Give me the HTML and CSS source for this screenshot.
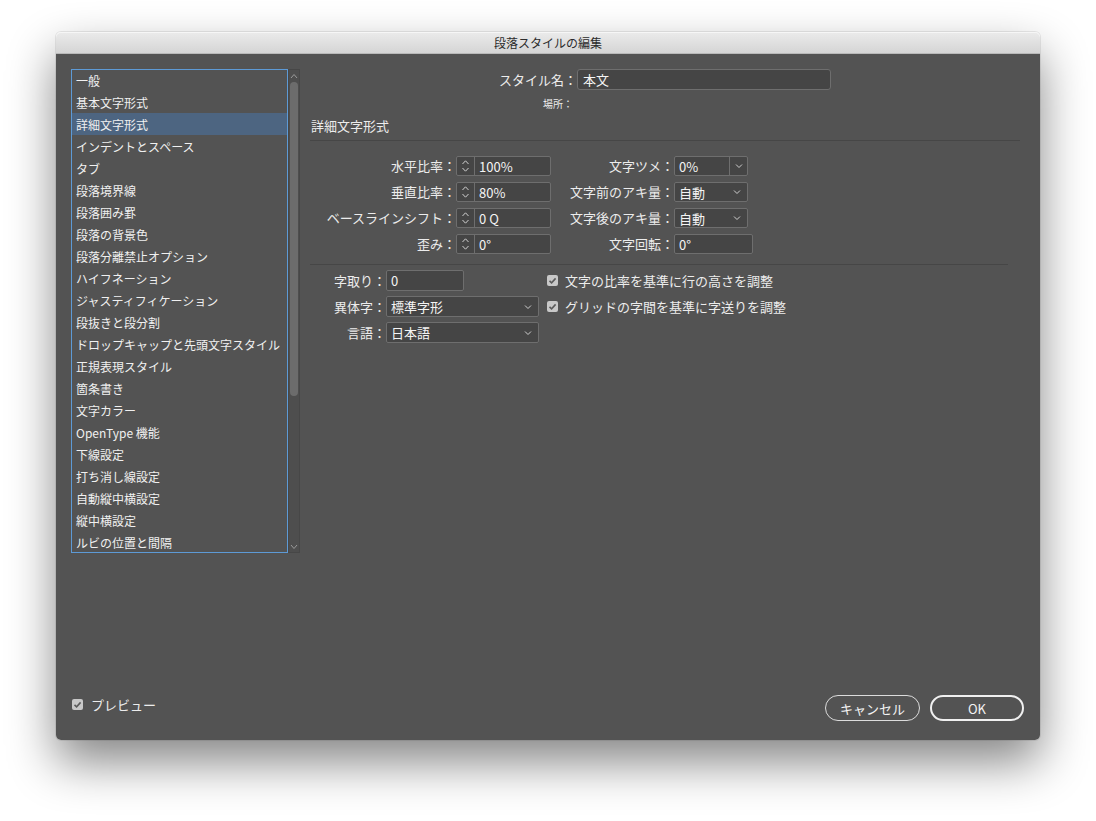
FILE: index.html
```html
<!DOCTYPE html>
<html lang="ja">
<head>
<meta charset="utf-8">
<title>段落スタイルの編集</title>
<link rel="stylesheet" href="styles.css">
</head>
<body>
<div class="window">
  <div class="titlebar">段落スタイルの編集</div>
  <div class="body">
    <div class="main">
      <div class="sidebar">
        <ul class="list">
          <li>一般</li>
          <li>基本文字形式</li>
          <li class="selected">詳細文字形式</li>
          <li>インデントとスペース</li>
          <li>タブ</li>
          <li>段落境界線</li>
          <li>段落囲み罫</li>
          <li>段落の背景色</li>
          <li>段落分離禁止オプション</li>
          <li>ハイフネーション</li>
          <li>ジャスティフィケーション</li>
          <li>段抜きと段分割</li>
          <li>ドロップキャップと先頭文字スタイル</li>
          <li>正規表現スタイル</li>
          <li>箇条書き</li>
          <li>文字カラー</li>
          <li>OpenType 機能</li>
          <li>下線設定</li>
          <li>打ち消し線設定</li>
          <li>自動縦中横設定</li>
          <li>縦中横設定</li>
          <li>ルビの位置と間隔</li>
        </ul>
        <div class="scrollbar">
          <svg class="sb-arrow" width="8" height="6" viewBox="0 0 8 6"><polyline points="1,5 4,1.5 7,5" fill="none" stroke="#9a9a9a" stroke-width="1"/></svg>
          <div class="thumb"></div>
          <div class="sb-spacer"></div>
          <svg class="sb-arrow" width="8" height="6" viewBox="0 0 8 6"><polyline points="1,1 4,4.5 7,1" fill="none" stroke="#9a9a9a" stroke-width="1"/></svg>
        </div>
      </div>
      <div class="panel">
        <div class="name-row">
          <span class="name-label">スタイル名：</span>
          <div class="textbox name-input">本文</div>
        </div>
        <div class="place-row"><span class="name-label small">場所：</span></div>
        <div class="section-title">詳細文字形式</div>
        <div class="sep sep1"></div>
        <div class="fields">
          <span class="label">水平比率：</span>
          <div class="spin"><span class="arrows"><svg width="9" height="16" viewBox="0 0 9 16"><polyline points="1.5,6 4.5,2.8 7.5,6" fill="none" stroke="#d0d0d0" stroke-width="1"/><polyline points="1.5,10 4.5,13.2 7.5,10" fill="none" stroke="#d0d0d0" stroke-width="1"/></svg></span><span class="val">100%</span></div>
          <span class="label">文字ツメ：</span>
          <div class="combo w74"><span class="val">0%</span><span class="dd"><svg width="8" height="6" viewBox="0 0 8 6"><polyline points="1,1.5 4,4.5 7,1.5" fill="none" stroke="#cfcfcf" stroke-width="1"/></svg></span></div>

          <span class="label">垂直比率：</span>
          <div class="spin"><span class="arrows"><svg width="9" height="16" viewBox="0 0 9 16"><polyline points="1.5,6 4.5,2.8 7.5,6" fill="none" stroke="#d0d0d0" stroke-width="1"/><polyline points="1.5,10 4.5,13.2 7.5,10" fill="none" stroke="#d0d0d0" stroke-width="1"/></svg></span><span class="val">80%</span></div>
          <span class="label">文字前のアキ量：</span>
          <div class="select w74"><span class="val">自動</span><svg class="chev" width="8" height="6" viewBox="0 0 8 6"><polyline points="1,1.5 4,4.5 7,1.5" fill="none" stroke="#cfcfcf" stroke-width="1"/></svg></div>

          <span class="label">ベースラインシフト：</span>
          <div class="spin"><span class="arrows"><svg width="9" height="16" viewBox="0 0 9 16"><polyline points="1.5,6 4.5,2.8 7.5,6" fill="none" stroke="#d0d0d0" stroke-width="1"/><polyline points="1.5,10 4.5,13.2 7.5,10" fill="none" stroke="#d0d0d0" stroke-width="1"/></svg></span><span class="val">0 Q</span></div>
          <span class="label">文字後のアキ量：</span>
          <div class="select w74"><span class="val">自動</span><svg class="chev" width="8" height="6" viewBox="0 0 8 6"><polyline points="1,1.5 4,4.5 7,1.5" fill="none" stroke="#cfcfcf" stroke-width="1"/></svg></div>

          <span class="label">歪み：</span>
          <div class="spin"><span class="arrows"><svg width="9" height="16" viewBox="0 0 9 16"><polyline points="1.5,6 4.5,2.8 7.5,6" fill="none" stroke="#d0d0d0" stroke-width="1"/><polyline points="1.5,10 4.5,13.2 7.5,10" fill="none" stroke="#d0d0d0" stroke-width="1"/></svg></span><span class="val">0°</span></div>
          <span class="label">文字回転：</span>
          <div class="textbox w79"><span class="val">0°</span></div>
        </div>
        <div class="sep sep2"></div>
        <div class="lower">
          <span class="label">字取り：</span>
          <div class="textbox w78"><span class="val">0</span></div>
          <div class="check-cell"><span class="cb"><svg width="11" height="11" viewBox="0 0 11 11"><polyline points="2.5,5.8 4.6,7.8 8.6,3.4" fill="none" stroke="#5b5b5b" stroke-width="1.6"/></svg></span>文字の比率を基準に行の高さを調整</div>

          <span class="label">異体字：</span>
          <div class="select"><span class="val">標準字形</span><svg class="chev" width="8" height="6" viewBox="0 0 8 6"><polyline points="1,1.5 4,4.5 7,1.5" fill="none" stroke="#cfcfcf" stroke-width="1"/></svg></div>
          <div class="check-cell"><span class="cb"><svg width="11" height="11" viewBox="0 0 11 11"><polyline points="2.5,5.8 4.6,7.8 8.6,3.4" fill="none" stroke="#5b5b5b" stroke-width="1.6"/></svg></span>グリッドの字間を基準に字送りを調整</div>

          <span class="label">言語：</span>
          <div class="select"><span class="val">日本語</span><svg class="chev" width="8" height="6" viewBox="0 0 8 6"><polyline points="1,1.5 4,4.5 7,1.5" fill="none" stroke="#cfcfcf" stroke-width="1"/></svg></div>
          <div></div>
        </div>
      </div>
    </div>
    <div class="footer">
      <div class="preview"><span class="cb"><svg width="11" height="11" viewBox="0 0 11 11"><polyline points="2.5,5.8 4.6,7.8 8.6,3.4" fill="none" stroke="#5b5b5b" stroke-width="1.6"/></svg></span>プレビュー</div>
      <div class="buttons">
        <button class="btn cancel">キャンセル</button>
        <button class="btn ok">OK</button>
      </div>
    </div>
  </div>
</div>
</body>
</html>
```
FILE: styles.css
```css
html, body {
  margin: 0;
  padding: 0;
  background: #ffffff;
}
body {
  font-family: "Noto Sans CJK JP", "Noto Sans", sans-serif;
  color: #ececec;
  min-height: 821px;
  padding-top: 32px;
  box-sizing: border-box;
}
.window {
  margin: 0 0 0 56px;
  width: 984px;
  height: 708px;
  border-radius: 5px;
  display: flex;
  flex-direction: column;
  box-shadow: 0 22px 48px rgba(0, 0, 0, 0.48), 0 0 0 1px rgba(0, 0, 0, 0.08);
}
.titlebar {
  height: 21px;
  line-height: 21px;
  border-bottom: 1px solid #b9b9b9;
  background: linear-gradient(#ebebeb, #d5d5d5);
  border-radius: 5px 5px 0 0;
  text-align: center;
  font-size: 12px;
  color: #2c2c2c;
  box-shadow: inset 0 1px 0 #f6f6f6;
}
.body {
  flex: 1;
  background: #535353;
  border-radius: 0 0 5px 5px;
  padding: 15px 16px 19px 15px;
  display: flex;
  flex-direction: column;
}
.main {
  display: flex;
  gap: 10px;
}
.sidebar {
  display: flex;
  height: 484px;
}
.list {
  margin: 0;
  padding: 0;
  list-style: none;
  width: 217px;
  height: 484px;
  outline: 1px solid #5d9ad6;
  outline-offset: -1px;
  font-size: 12px;
}
.list li {
  height: 22px;
  line-height: 23px;
  padding-left: 5px;
  color: #f0f0f0;
  white-space: nowrap;
}
.list li.selected {
  background: #4d6581;
}
.scrollbar {
  width: 12px;
  height: 484px;
  box-sizing: border-box;
  background: #4e4e4e;
  border: 1px solid #474747;
  display: flex;
  flex-direction: column;
  align-items: center;
}
.sb-arrow {
  margin: 3px 0 2px;
  flex: none;
}
.thumb {
  margin-top: 1px;
  width: 8px;
  height: 314px;
  border-radius: 4px;
  background: #6c6c6c;
}
.sb-spacer {
  flex: 1;
}
.panel {
  flex: 1;
  font-size: 13px;
}
.name-row {
  display: flex;
  align-items: center;
  height: 21px;
}
.name-label {
  width: 267px;
  text-align: right;
  flex: none;
}
.name-label.small {
  font-size: 10px;
  width: 263px;
}
.textbox, .spin, .combo, .select {
  box-sizing: border-box;
  height: 20px;
  background: #454545;
  border: 1px solid #6e6e6e;
  border-radius: 2px;
  display: flex;
  align-items: center;
  color: #f4f4f4;
}
.name-input {
  width: 254px;
  height: 21px;
  border-radius: 3px;
  padding-left: 5px;
}
.place-row {
  display: flex;
  height: 14px;
  line-height: 14px;
  margin-top: 7px;
}
.section-title {
  margin-top: 6px;
  height: 18px;
  line-height: 18px;
  padding-left: 1px;
}
.sep {
  height: 1px;
  background: #464646;
}
.sep1 {
  margin-top: 5px;
  width: 710px;
}
.sep2 {
  margin-top: 10px;
  width: 698px;
}
.fields {
  margin-top: 15px;
  display: grid;
  grid-template-columns: 146px 95px 123px auto;
  grid-auto-rows: 20px;
  row-gap: 6px;
  align-items: center;
}
.label {
  text-align: right;
  white-space: nowrap;
  line-height: 20px;
}
.spin .arrows {
  width: 17px;
  height: 18px;
  border-right: 1px solid #6e6e6e;
  display: flex;
  align-items: center;
  justify-content: center;
  flex: none;
}
.val {
  padding-left: 4px;
  flex: 1;
  white-space: nowrap;
}
.combo .dd {
  width: 17px;
  height: 18px;
  border-left: 1px solid #6e6e6e;
  display: flex;
  align-items: center;
  justify-content: center;
}
.select .chev {
  margin-right: 6px;
  flex: none;
}
.w74 { width: 74px; }
.w79 { width: 79px; }
.w78 { width: 78px; }
.lower {
  margin-top: 5px;
  display: grid;
  grid-template-columns: 76px 153px auto;
  grid-auto-rows: 21px;
  row-gap: 5px;
  align-items: center;
}
.lower .textbox, .lower .select {
  height: 21px;
}
.check-cell {
  display: flex;
  align-items: center;
  padding-left: 8px;
  white-space: nowrap;
}
.cb {
  width: 11px;
  height: 11px;
  border-radius: 2px;
  background: #c8c8c8;
  display: inline-flex;
  margin-right: 7px;
  flex: none;
}
.footer {
  margin-top: auto;
  display: flex;
  justify-content: space-between;
  align-items: flex-start;
  height: 26px;
}
.preview {
  display: flex;
  align-items: center;
  height: 19px;
  padding-left: 1px;
  font-size: 13px;
}
.preview .cb {
  margin-right: 8px;
}
.buttons {
  display: flex;
  gap: 10px;
}
.btn {
  box-sizing: border-box;
  height: 26px;
  border-radius: 13px;
  background: transparent;
  color: #f4f4f4;
  font-family: "Noto Sans CJK JP", "Noto Sans", sans-serif;
  font-size: 13px;
  padding: 0;
  line-height: 1;
}
.cancel {
  width: 95px;
  border: 1px solid #dcdcdc;
}
.ok {
  width: 94px;
  border: 2px solid #f0f0f0;
}
```
